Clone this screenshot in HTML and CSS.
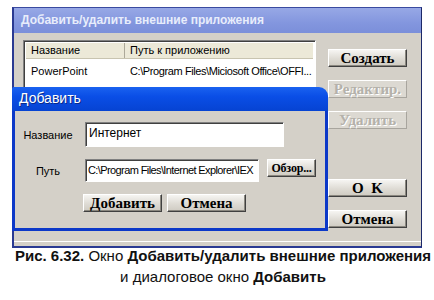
FILE: index.html
```html
<!DOCTYPE html>
<html lang="ru">
<head>
    <meta charset="UTF-8">
    <title>Добавить/удалить внешние приложения</title>
    <link rel="stylesheet" href="styles.css">
</head>
<body>
    <div class="screen">
        <div class="window">
            <div class="title">Добавить/удалить внешние приложения</div>
            <div class="win-body">
                <div class="list">
                    <div class="list-head">
                        <span class="col-name">Название</span>
                        <span class="col-path">Путь к приложению</span>
                    </div>
                    <div class="list-row">
                        <span class="col-name">PowerPoint</span>
                        <span class="col-path path-text">C:\Program Files\Miciosoft Office\OFFI...</span>
                    </div>
                </div>
                <div class="side">
                    <button class="btn side-btn">Создать</button>
                    <button class="btn side-btn off">Редактир.</button>
                    <button class="btn side-btn off">Удалить</button>
                    <button class="btn side-btn ok">O&nbsp;&nbsp;K</button>
                    <button class="btn side-btn">Отмена</button>
                </div>
            </div>
            <div class="win-foot"></div>
        </div>

        <!-- dialog over the main window -->
        <div class="dialog">
            <div class="dlg-title">Добавить</div>
            <div class="dlg-body">
                <div class="field">
                    <label class="lbl">Название</label>
                    <div class="input name-input">Интернет</div>
                </div>
                <div class="field">
                    <label class="lbl">Путь</label>
                    <div class="input path-input">C:\Program Files\Internet Explorer\IEX</div>
                    <button class="btn browse">Обзор...</button>
                </div>
                <div class="dlg-buttons">
                    <button class="btn dlg-btn">Добавить</button>
                    <button class="btn dlg-btn">Отмена</button>
                </div>
            </div>
        </div>
    </div>

    <p class="caption"><b>Рис. 6.32.</b> Окно <b>Добавить/удалить внешние приложения</b><br>и диалоговое окно <b>Добавить</b></p>
</body>
</html>
```

FILE: styles.css
```css
body {
    margin: 0;
    background: #fff;
    font-family: "Liberation Sans", Arial, sans-serif;
}
.screen {
    position: relative;
    height: 248px;
    padding-top: 7px;
    box-sizing: border-box;
}
.window {
    margin-left: 12px;
    width: 410px;
    height: 241px;
    box-sizing: border-box;
    background: #d4d0c8;
    border: 2px solid #2a3a92;
    border-top: 1px solid #3a4aa0;
    border-right: 1px solid #1c2868;
    display: flex;
    flex-direction: column;
}
.title {
    height: 25px;
    line-height: 25px;
    padding-left: 7px;
    background: linear-gradient(#97a8e6, #8396de 60%, #7b8fda);
    color: #e8edfb;
    font-size: 12px;
    font-weight: bold;
}
.win-body {
    display: flex;
    flex: 1;
    padding: 7px 0 0 9px;
}
.list {
    width: 293px;
    height: 80px;
    background: #fff;
    border: 1px solid #808080;
    border-right-color: #fff;
    border-bottom-color: #fff;
    box-shadow: inset 1px 1px 0 #404040;
    padding: 2px 0 0 2px;
    box-sizing: border-box;
    font-size: 11px;
    color: #000;
}
.list-head, .list-row {
    display: flex;
    height: 15px;
    line-height: 15px;
}
.list-head {
    background: #ece9d8;
    border-bottom: 1px solid #c8c4b0;
    margin-right: 2px;
}
.list-head .col-name {
    border-right: 1px solid #aca899;
}
.list-row {
    margin-top: 5px;
}
.col-name {
    width: 99px;
    padding-left: 5px;
    box-sizing: border-box;
}
.col-path {
    padding-left: 5px;
}
.path-text {
    letter-spacing: -0.4px;
}
.side {
    display: flex;
    flex-direction: column;
    margin-left: 12px;
    padding-top: 9px;
}
.btn {
    font-family: "Liberation Serif", "Times New Roman", serif;
    font-weight: bold;
    color: #000;
    background: linear-gradient(#f6f5f2, #dedbd4 55%, #cfcbc2);
    border: 1px solid;
    border-color: #fff #404040 #404040 #fff;
    box-shadow: inset -1px -1px 0 #8a877f;
    padding: 0;
    cursor: pointer;
}
.side-btn {
    width: 79px;
    height: 18px;
    margin-bottom: 13px;
    font-size: 15px;
    line-height: 15px;
}
.side-btn.off {
    color: #b4b1aa;
    text-shadow: 1px 1px 0 #fff;
    border-color: #fff #a8a59e #a8a59e #fff;
    box-shadow: none;
    background: #dcd9d2;
}
.side-btn.ok {
    margin-top: 37px;
}
.win-foot {
    height: 15px;
    border-top: 1px solid #fff;
}
.dialog {
    position: absolute;
    left: 12px;
    top: 87px;
    width: 316px;
    height: 144px;
    display: flex;
    flex-direction: column;
}
.dlg-title {
    height: 24px;
    line-height: 22px;
    padding-left: 7px;
    background: linear-gradient(#1a62f0, #0a4ee6 40%, #0643d2);
    border-radius: 2px 9px 0 0;
    color: #fff;
    font-size: 14px;
    text-shadow: 1px 1px 0 #0a2a8a;
}
.dlg-body {
    flex: 1;
    background: #d4d0c8;
    border: 3px solid #0c38c8;
    border-top: none;
    padding-top: 11px;
}
.field {
    display: flex;
    align-items: flex-start;
    margin-bottom: 12px;
}
.lbl {
    width: 60px;
    margin-left: 3px;
    margin-right: 7px;
    text-align: center;
    font-size: 11px;
    align-self: center;
}
.input {
    background: #fff;
    border: 1px solid #808080;
    border-right-color: #fff;
    border-bottom-color: #fff;
    box-shadow: inset 1px 1px 0 #404040;
    box-sizing: border-box;
    font-size: 12px;
    padding: 3px 0 0 3px;
    white-space: nowrap;
    overflow: hidden;
}
.name-input {
    width: 199px;
    height: 25px;
}
.path-input {
    width: 174px;
    height: 23px;
    padding: 4px 0 0 2px;
    font-size: 11px;
    letter-spacing: -0.6px;
}
.browse {
    width: 49px;
    height: 18px;
    margin-left: 8px;
    font-size: 12px;
    letter-spacing: -0.2px;
}
.dlg-buttons {
    display: flex;
    gap: 5px;
    margin-left: 68px;
    margin-top: 4px;
}
.dlg-btn {
    width: 79px;
    height: 18px;
    font-size: 15px;
    line-height: 15px;
}
.caption {
    margin: -3px 0 0;
    padding-left: 12px;
    text-align: center;
    font-size: 15px;
    line-height: 21px;
    color: #111;
}
```
